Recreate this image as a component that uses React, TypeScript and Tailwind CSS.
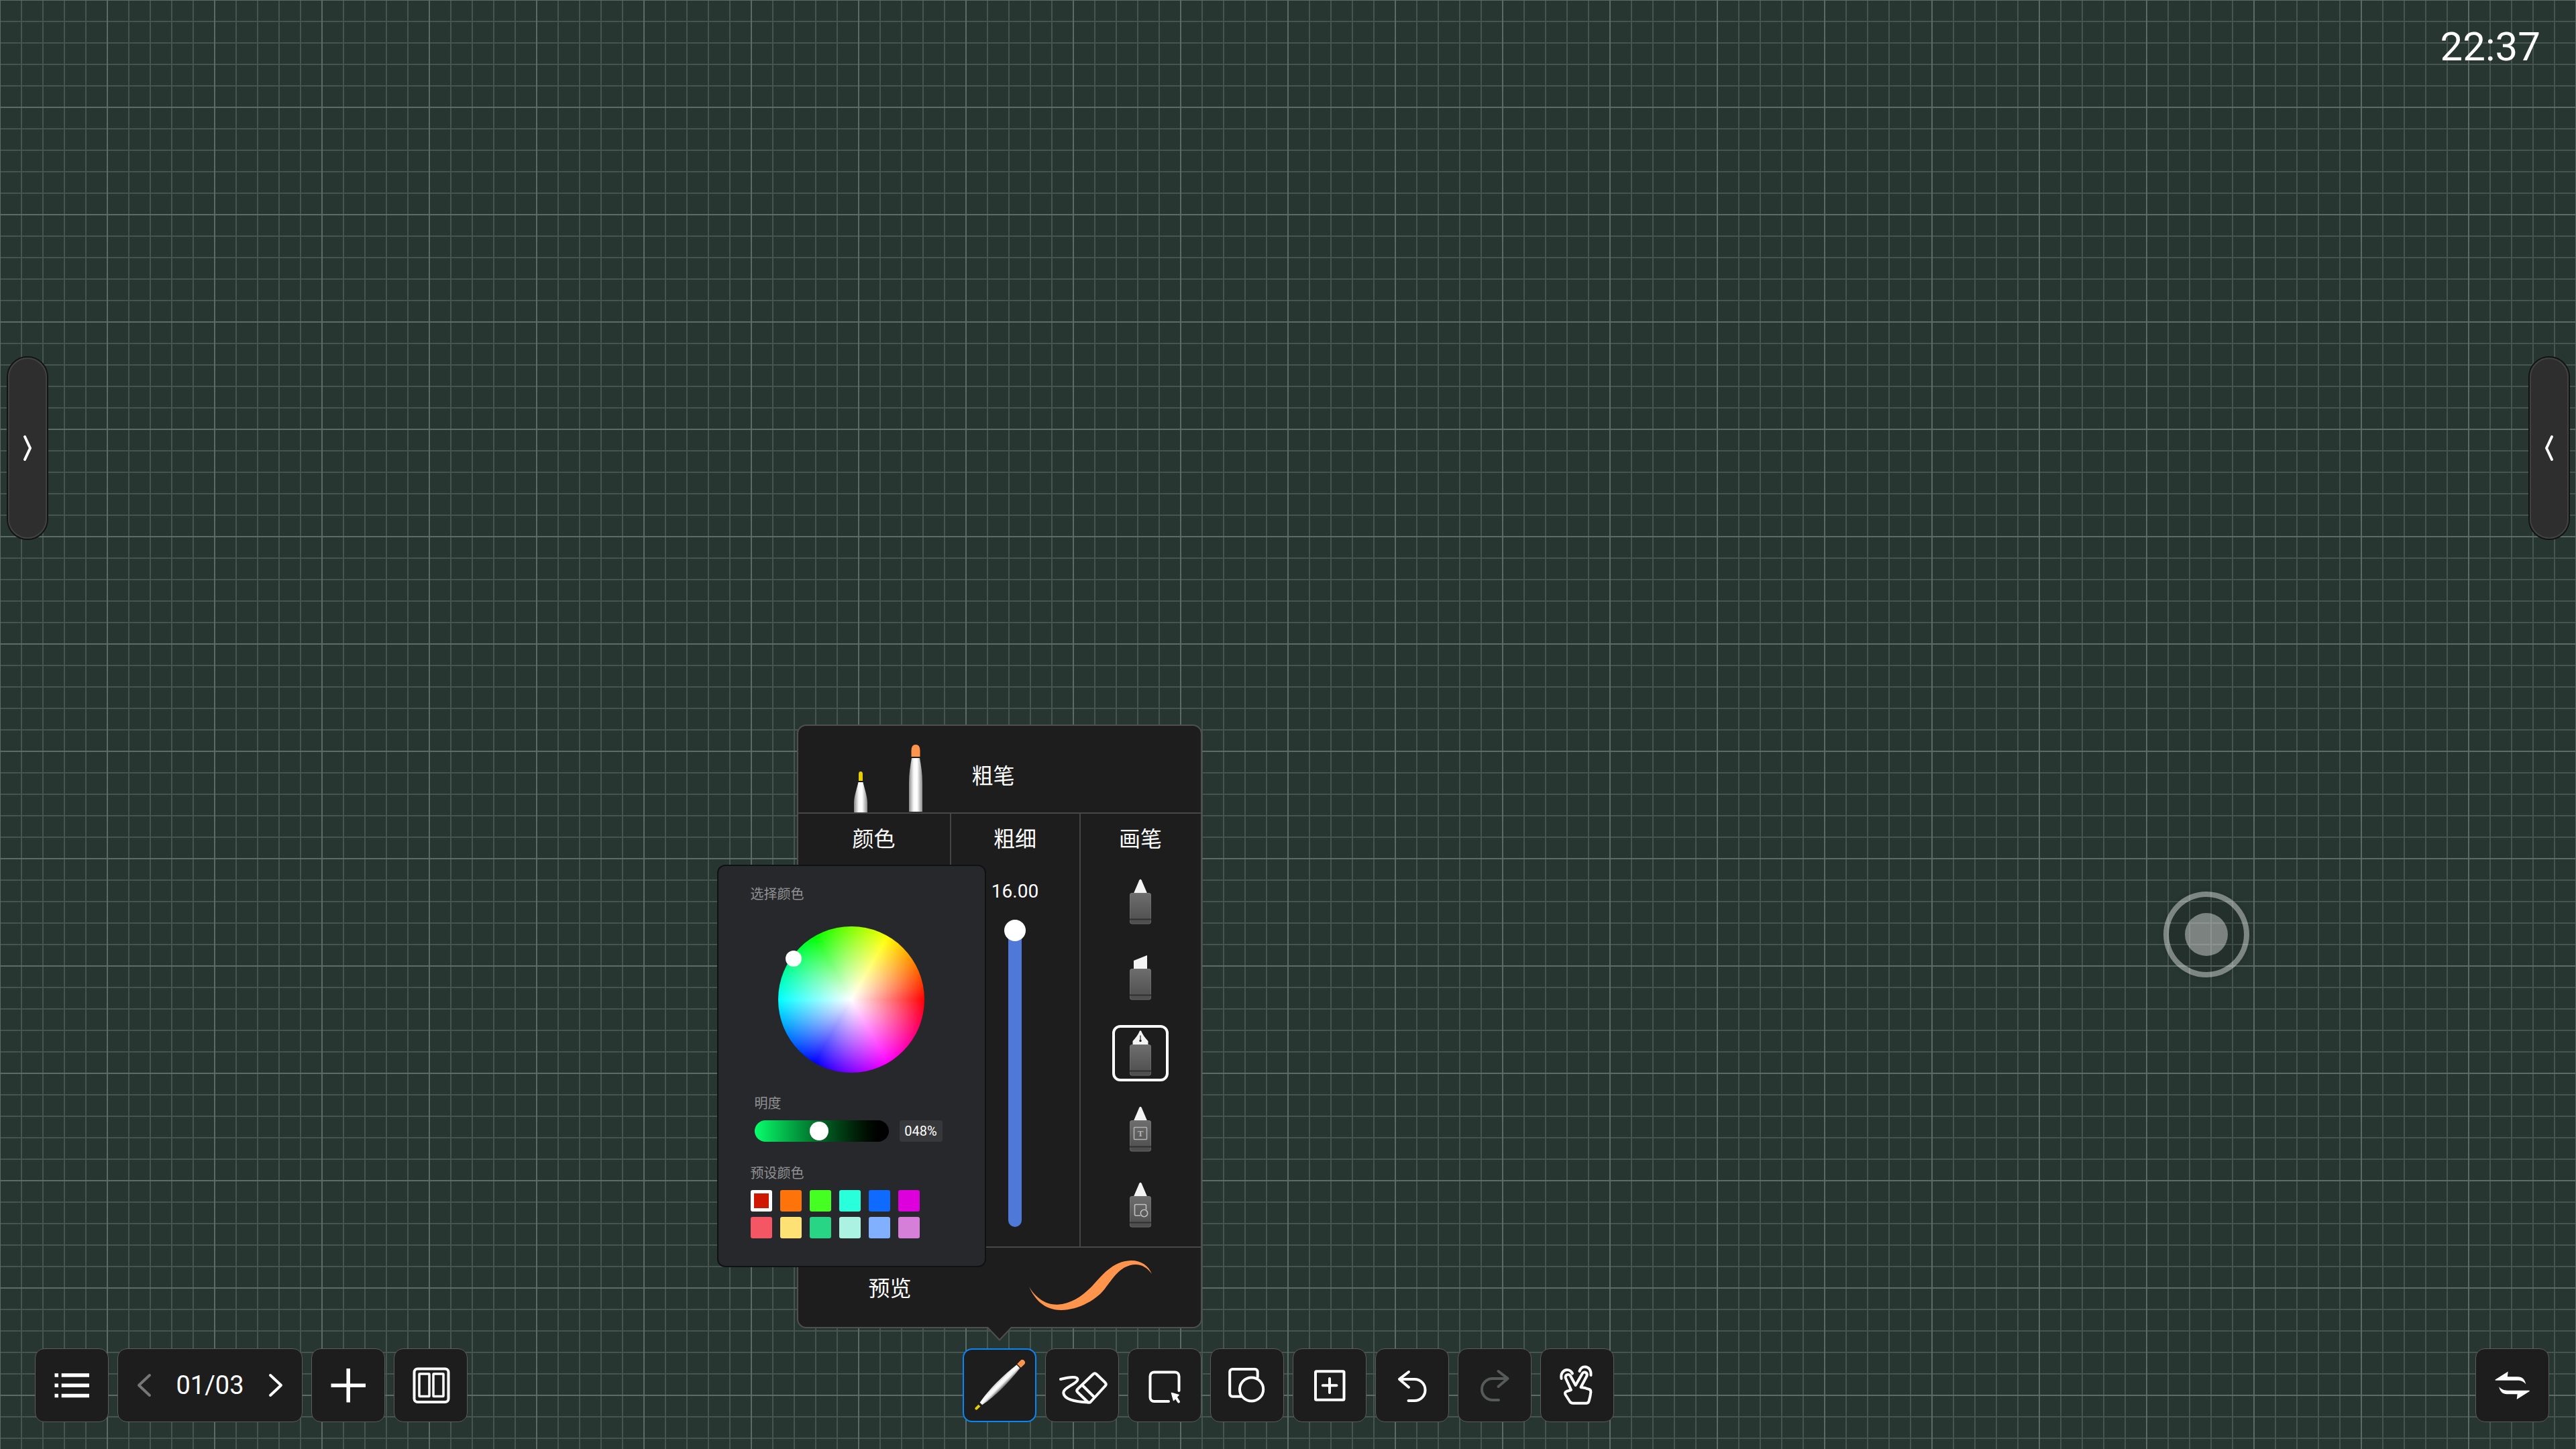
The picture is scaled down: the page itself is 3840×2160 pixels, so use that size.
import React, { useState } from "react";

const PRESETS = [
  { name: "红", color: "#cf1800" },
  { name: "橙", color: "#ff740a" },
  { name: "绿", color: "#45ff22" },
  { name: "青", color: "#29ffdb" },
  { name: "蓝", color: "#0f6aff" },
  { name: "紫", color: "#dd00dd" },
  { name: "浅红", color: "#f45763" },
  { name: "浅黄", color: "#fee175" },
  { name: "浅绿", color: "#28d584" },
  { name: "浅青", color: "#acf2e3" },
  { name: "浅蓝", color: "#80b0ff" },
  { name: "浅紫", color: "#d57fd9" },
];

const TOOL =
  "block h-[110px] w-[110px] rounded-[14px] border border-[#5c5c5c] bg-[#1d1d1d] text-white";

function Glyph({ children, width = 4 }: { children: React.ReactNode; width?: number }) {
  return (
    <svg
      viewBox="1 1 108 108"
      className="block h-full w-full"
      fill="none"
      stroke="currentColor"
      strokeWidth={width}
      strokeLinecap="round"
      strokeLinejoin="round"
      aria-hidden="true"
    >
      {children}
    </svg>
  );
}

function ToolButton({
  label,
  children,
  muted = false,
  width = 4,
}: {
  label: string;
  children: React.ReactNode;
  muted?: boolean;
  width?: number;
}) {
  return (
    <button type="button" aria-label={label} disabled={muted} className={TOOL}>
      <span className={muted ? "block h-full text-[#565b5a]" : "block h-full text-white"}>
        <Glyph width={width}>{children}</Glyph>
      </span>
    </button>
  );
}

function SideHandle({ label, path }: { label: string; path: string }) {
  return (
    <button
      type="button"
      aria-label={label}
      className="h-[274px] w-[62px] rounded-full border-2 border-[#121413] bg-[#2e2e2e] text-white"
    >
      <span className="block h-full w-full rounded-full border-2 border-[#414141]">
        <svg
          viewBox="4 4 54 266"
          className="block h-full w-full"
          fill="none"
          stroke="currentColor"
          strokeWidth="4"
          strokeLinecap="round"
          strokeLinejoin="round"
          aria-hidden="true"
        >
          <path d={path} />
        </svg>
      </span>
    </button>
  );
}

type Brush = "pen" | "marker" | "fountain" | "text" | "shape";

function BrushIcon({ kind }: { kind: Brush }) {
  return (
    <svg viewBox="0 0 34 68" className="h-[68px] w-[34px]" aria-hidden="true">
      <defs>
        <linearGradient id={"body-" + kind} x1="0" y1="0" x2="0" y2="1">
          <stop offset="0" stopColor="#6e6e6e" />
          <stop offset="1" stopColor="#4c4c4c" />
        </linearGradient>
      </defs>
      {kind === "marker" ? (
        <path d="M7 21V9L27 1V21Z" fill="#f3f3f3" />
      ) : kind === "fountain" ? (
        <>
          <path d="M5.500 22V16C10 11 14 6 16 0.500H18C20 6 24 11 28.500 16V22Z" fill="#f3f3f3" />
          <path d="M17 7.500V15" stroke="#1d1d1d" strokeWidth="1.200" />
          <circle cx="17" cy="15.500" r="1.700" fill="#1d1d1d" />
        </>
      ) : (
        <path d="M7 21.500L15.200 2.200Q17 -0.500 18.800 2.200L27 21.500Z" fill="#f3f3f3" />
      )}
      <rect x="1" y="21" width="32" height="46.500" rx="3.500" fill={`url(#body-${kind})`} />
      <rect x="1.500" y="21.500" width="31" height="45.500" rx="3" fill="none" stroke="#7c7c7c" strokeOpacity="0.5" />
      <rect x="1" y="59.500" width="32" height="2" fill="#303032" />
      {kind === "text" && (
        <>
          <rect x="7.500" y="31.500" width="19" height="18" rx="1" fill="none" stroke="#b4b4b4" strokeWidth="1.500" />
          <text
            x="17"
            y="45"
            textAnchor="middle"
            fontFamily="Liberation Serif, serif"
            fontWeight="700"
            fontSize="13"
            fill="#b4b4b4"
          >
            T
          </text>
        </>
      )}
      {kind === "shape" && (
        <g fill="none" stroke="#c0c0c0" strokeWidth="1.600">
          <path d="M17 50H10Q8.500 50 8.500 48.500V35Q8.500 33.500 10 33.500H24Q25.500 33.500 25.500 35V41" />
          <circle cx="22.500" cy="46.500" r="5.200" />
        </g>
      )}
    </svg>
  );
}

const BRUSHES: { kind: Brush; label: string }[] = [
  { kind: "pen", label: "硬笔" },
  { kind: "marker", label: "荧光笔" },
  { kind: "fountain", label: "钢笔" },
  { kind: "text", label: "文字识别笔" },
  { kind: "shape", label: "图形识别笔" },
];

function BarrelGradient({ id }: { id: string }) {
  return (
    <linearGradient id={id} x1="0" y1="0" x2="1" y2="0">
      <stop offset="0" stopColor="#8a8a8a" />
      <stop offset="0.35" stopColor="#f8f8f8" />
      <stop offset="0.6" stopColor="#ffffff" />
      <stop offset="1" stopColor="#8a8a8a" />
    </linearGradient>
  );
}

function ColorPopup() {
  const [light, setLight] = useState(48);
  const [preset, setPreset] = useState("红");
  return (
    <section
      aria-label="选择颜色"
      className="absolute top-[207px] left-[-121px] flex w-[401px] flex-col rounded-xl border-2 border-[#101113] bg-[#27282c] px-12 pt-7 pb-[41px] text-[20px] leading-7 text-[#919193]"
    >
      <h3>选择颜色</h3>
      <div className="relative mt-[34px] h-[218px] w-[218px] self-center rounded-full bg-[radial-gradient(closest-side,#fff,rgba(255,255,255,0)),conic-gradient(from_90deg,#f00,#f0f,#00f,#0ff,#0f0,#ff0,#f00)]">
        <button
          type="button"
          aria-label="色相"
          className="absolute top-9 left-[11px] h-6 w-6 rounded-full bg-white"
        />
      </div>
      <label htmlFor="brightness" className="mt-8 ml-1.5">
        明度
      </label>
      <div className="mt-[11px] ml-1.5 flex gap-4">
        <input
          id="brightness"
          type="range"
          min={0}
          max={100}
          value={light}
          onChange={(e) => setLight(Number(e.target.value))}
          className="h-8 w-[200px] appearance-none rounded-full bg-linear-to-r from-[#08ff6c] to-black [&::-webkit-slider-thumb]:h-7 [&::-webkit-slider-thumb]:w-7 [&::-webkit-slider-thumb]:appearance-none [&::-webkit-slider-thumb]:rounded-full [&::-webkit-slider-thumb]:bg-white"
        />
        <output
          htmlFor="brightness"
          className="h-8 w-16 rounded-sm bg-[#37383c] text-center leading-8 text-white"
        >
          {String(light).padStart(3, "0")}%
        </output>
      </div>
      <h3 className="mt-[33px]">预设颜色</h3>
      <div className="mt-[11px] grid grid-cols-[repeat(6,32px)] gap-x-3 gap-y-2">
        {PRESETS.map((p) => (
          <button
            key={p.name}
            type="button"
            aria-label={p.name}
            aria-pressed={preset === p.name}
            onClick={() => setPreset(p.name)}
            style={{ backgroundColor: p.color }}
            className={
              preset === p.name
                ? "h-8 rounded-[3px] border-[5px] border-white"
                : "h-8 rounded-[3px]"
            }
          />
        ))}
      </div>
    </section>
  );
}

function PenPanel() {
  const [size, setSize] = useState(16);
  const [brush, setBrush] = useState<Brush>("fountain");
  return (
    <section
      aria-label="画笔设置"
      className="absolute bottom-full left-1/2 mb-[30px] w-[604px] -translate-x-1/2 rounded-[14px] border-2 border-[#4f4f50] bg-[#1d1d1d] text-[32px] leading-10 text-white"
    >
      <header className="flex h-[131px] items-end border-b-2 border-[#47474b] pl-[73px]">
        <button type="button" aria-label="细笔" className="block">
          <svg viewBox="0 0 40 102" className="block h-[102px] w-10" aria-hidden="true">
            <defs>
              <BarrelGradient id="thin-barrel" />
            </defs>
            <path d="M17 55V45Q17 41 20 41Q23 41 23 45V55Z" fill="#e8d000" />
            <path d="M10 102V88C10 78 14 68 16.500 57H23.500C26 68 30 78 30 88V102Z" fill="url(#thin-barrel)" />
          </svg>
        </button>
        <button type="button" aria-label="粗笔" aria-pressed="true" className="ml-[42px] block">
          <svg viewBox="0 0 40 102" className="block h-[102px] w-10" aria-hidden="true">
            <defs>
              <BarrelGradient id="thick-barrel" />
            </defs>
            <path d="M13.500 19V10Q13.500 1 20 1Q26.500 1 26.500 10V19Z" fill="#ff954d" />
            <path d="M10 101V58C10 44 12 32 14 21H26C28 32 30 44 30 58V101Z" fill="url(#thick-barrel)" />
          </svg>
        </button>
        <h2 className="mb-[34px] ml-16">粗笔</h2>
      </header>

      <div className="grid grid-cols-[228px_193px_1fr] border-b-2 border-[#47474b] text-center">
        <section className="border-r-2 border-[#444447] pt-[18px]">
          <h2>颜色</h2>
        </section>
        <section className="flex flex-col items-center border-r-2 border-[#444447] pt-[18px] pb-[29px]">
          <h2>
            <label htmlFor="stroke-size">粗细</label>
          </h2>
          <output htmlFor="stroke-size" className="mt-10 text-[28px] leading-9">
            {size.toFixed(2)}
          </output>
          <input
            id="stroke-size"
            type="range"
            min={1}
            max={16}
            step={0.25}
            value={size}
            onChange={(e) => setSize(Number(e.target.value))}
            className="mt-6 h-[458px] w-8 appearance-none bg-transparent [direction:rtl] [writing-mode:vertical-lr] [&::-webkit-slider-runnable-track]:w-5 [&::-webkit-slider-runnable-track]:rounded-full [&::-webkit-slider-runnable-track]:bg-[#4f79d9] [&::-webkit-slider-thumb]:-ml-1.5 [&::-webkit-slider-thumb]:h-8 [&::-webkit-slider-thumb]:w-8 [&::-webkit-slider-thumb]:appearance-none [&::-webkit-slider-thumb]:rounded-full [&::-webkit-slider-thumb]:bg-white"
          />
        </section>
        <section className="pt-[18px] pb-5">
          <h2>画笔</h2>
          <div className="mt-[31px] flex flex-col items-center gap-[29px]">
            {BRUSHES.map((b) => (
              <button
                key={b.kind}
                type="button"
                aria-label={b.label}
                aria-pressed={brush === b.kind}
                onClick={() => setBrush(b.kind)}
                className={
                  brush === b.kind
                    ? "flex h-[84px] w-[84px] items-center justify-center rounded-xl border-4 border-white"
                    : "flex h-[84px] w-[84px] items-center justify-center"
                }
              >
                <BrushIcon kind={b.kind} />
              </button>
            ))}
          </div>
        </section>
      </div>

      <footer className="flex h-[118px] items-center pl-[105px]">
        <h2 className="pt-1">预览</h2>
        <svg viewBox="0 0 184 80" className="ml-[175px] h-20 w-[184px]" aria-hidden="true">
          <path
            d="M0 39C10 56 25 66 42 65.700C62 65 78 54 93 39.300C108 23 124 1 152 0C168 0 178 8 183 20C176 11 169 6 158.500 6C137 7 127 24 115 39.300C103 58 73 74 48 74C22 74 8 57 0 39Z"
            fill="#ff954d"
          />
        </svg>
      </footer>

      <svg
        viewBox="0 0 38 22"
        className="absolute top-full left-1/2 h-[22px] w-[38px] -translate-x-1/2"
        aria-hidden="true"
      >
        <path d="M0 0H38V2H36.500L19 20L1.500 2H0Z" fill="#1d1d1d" />
        <path d="M0 1H1.500L19 19.500L36.500 1H38" fill="none" stroke="#4f4f50" strokeWidth="2" />
      </svg>

      <ColorPopup />
    </section>
  );
}

export default function App() {
  return (
    <main className="relative flex min-h-screen flex-col overflow-hidden bg-[#273630] bg-[linear-gradient(to_right,#5d6a65_2px,transparent_2px),linear-gradient(to_bottom,#5d6a65_2px,transparent_2px),linear-gradient(to_right,#465550_2px,transparent_2px),linear-gradient(to_bottom,#465550_2px,transparent_2px)] bg-[length:160px_160px,160px_160px,32px_32px,32px_32px] bg-[position:-1px_-1px] font-['Roboto','Noto_Sans_CJK_SC',sans-serif] text-white">
      <header className="flex justify-end pt-[34px] pr-[53px]">
        <time className="text-[60px] leading-[72px]">22:37</time>
      </header>

      <div className="mt-[425px] flex justify-between pr-[9px] pl-2.5">
        <SideHandle label="展开左侧栏" path="M27 120L35 137L27 154" />
        <SideHandle label="展开右侧栏" path="M35 120L27 137L35 154" />
      </div>

      <button
        type="button"
        aria-label="悬浮球"
        className="absolute top-[1329px] right-[487px] flex h-32 w-32 items-center justify-center rounded-full border-8 border-white/40 bg-black/10 bg-clip-padding shadow-[0_0_8px_rgba(0,0,0,0.12)]"
      >
        <span className="h-16 w-16 rounded-full bg-white/40" />
      </button>

      <footer className="mt-auto grid grid-cols-[1fr_auto_1fr] px-10 pb-10">
        <nav aria-label="页面" className="flex gap-[13px] pl-3">
          <ToolButton label="菜单" width={5}>
            <g strokeLinecap="butt">
              <path d="M29.500 40H35M39.700 40H81M29.500 55.300H35M39.700 55.300H81M29.500 70.500H35M39.700 70.500H81" strokeWidth="5.500" />
            </g>
          </ToolButton>
          <div className="flex h-[110px] w-[276px] items-center justify-between rounded-[14px] border border-[#5c5c5c] bg-[#1d1d1d] px-7">
            <button type="button" aria-label="上一页" disabled className="text-[#777777]">
              <svg viewBox="0 0 22 36" className="block h-9 w-[22px]" fill="none" stroke="currentColor" strokeWidth="4" strokeLinecap="round" strokeLinejoin="round" aria-hidden="true">
                <path d="M19 3L3 18L19 33" />
              </svg>
            </button>
            <span className="text-[38px] leading-none">01/03</span>
            <button type="button" aria-label="下一页" className="text-white">
              <svg viewBox="0 0 22 36" className="block h-9 w-[22px]" fill="none" stroke="currentColor" strokeWidth="4" strokeLinecap="round" strokeLinejoin="round" aria-hidden="true">
                <path d="M3 3L19 18L3 33" />
              </svg>
            </button>
          </div>
          <ToolButton label="新建页面">
            <path d="M55.200 30V80.500M29.500 55.300H81" strokeWidth="5.500" strokeLinecap="butt" />
          </ToolButton>
          <ToolButton label="全部页面">
            <rect x="30.500" y="30.500" width="51" height="49.500" rx="5" />
            <rect x="38" y="38" width="15" height="33.500" rx="0.500" strokeWidth="3.500" />
            <rect x="59" y="38" width="15" height="33.500" rx="0.500" strokeWidth="3.500" />
          </ToolButton>
        </nav>

        <nav aria-label="工具" className="flex gap-[13px]">
          <div className="relative">
            <button
              type="button"
              aria-label="画笔"
              aria-pressed="true"
              className="block h-[110px] w-[110px] rounded-[14px] border-2 border-[#0a85f5] bg-[#1d1d1d]"
            >
              <svg viewBox="2 2 106 106" className="block h-full w-full" aria-hidden="true">
                <defs>
                  <linearGradient id="pen-barrel" x1="0" y1="0" x2="1" y2="0">
                    <stop offset="0" stopColor="#c4c4c4" />
                    <stop offset="0.3" stopColor="#ffffff" />
                    <stop offset="0.6" stopColor="#f4f4f4" />
                    <stop offset="1" stopColor="#6a6a6a" />
                  </linearGradient>
                </defs>
                <g transform="translate(55 55) rotate(45)">
                  <path d="M-4 -41V-48Q-4 -52 0 -52Q4 -52 4 -48V-41Z" fill="#ff954d" />
                  <path d="M-3.500 -39.500H3.500C5 -28 6 -14 6 0C6 14 4.500 28 2.500 39H-2.500C-4.500 28 -6 14 -6 0C-6 -14 -5 -28 -3.500 -39.500Z" fill="url(#pen-barrel)" />
                  <path d="M-2 42.500H2V49Q2 51 0 51Q-2 51 -2 49Z" fill="#e8d000" />
                </g>
              </svg>
            </button>
            <PenPanel />
          </div>
          <ToolButton label="橡皮擦">
            <path d="M23 46C35 43 43 42 47 44C51 46.500 46 50.500 42 53C34 58 26 62 27.500 67.500C29 75 42 79.500 64 80.500" />
            <path d="M71.500 38.500Q74 36 76.500 38.500L89.500 51Q92 53.500 89.500 56L68 79.500Q65.500 82 63 79.500L48.500 65.500Q46 63 48.500 60.500Z" />
            <path d="M55.500 55L72.500 72" />
          </ToolButton>
          <ToolButton label="选择">
            <path d="M76.500 63V41.500A6 6 0 0 0 70.500 35.500H39.500A6 6 0 0 0 33.500 41.500V73A6 6 0 0 0 39.500 79H61" />
            <path d="M65.500 66.500L76 69.500L68.500 77.500Z" fill="currentColor" strokeWidth="1.500" />
            <path d="M71.500 72.500L76 79.500" />
          </ToolButton>
          <ToolButton label="图形">
            <path d="M70.700 43V35A4 4 0 0 0 66.700 31H33.200A4 4 0 0 0 29.200 35V67.700A4 4 0 0 0 33.200 71.700H46" />
            <circle cx="61.600" cy="61" r="17.600" />
          </ToolButton>
          <ToolButton label="插入">
            <rect x="34" y="34.300" width="42.500" height="42.500" rx="1.500" />
            <path d="M55 45V66M44.800 55.300H65.500" />
          </ToolButton>
          <ToolButton label="撤销">
            <path d="M50 35L36 45.900L50 58M36 45.900H58.500A16 16 0 0 1 58.500 78H49.500" />
          </ToolButton>
          <ToolButton label="重做" muted>
            <path d="M60.500 34L74.500 44.900L60.500 57M74.500 44.900H52A16 16 0 0 0 52 77H61" />
          </ToolButton>
          <ToolButton label="手势">
            <path d="M31.500 45C30 37 35 32 40 32C44 32 46.500 34.500 48 37.500M58.500 34C60 29.500 63.500 27.500 66.500 27.500C73 27.500 76 33 75.500 40" />
            <path d="M52.700 55L45 41C43 37.500 36 39 38 44.500L46 62L39.500 64Q36 65.500 37.500 69L44 79Q45.500 81.700 49 81.700H68.500Q71.500 81.700 72.500 79C74 74 75 69 75.400 65Q75.500 61 71.500 60.500Q69 60 67 59L60.500 58L69.500 41C71 35.500 64.500 33.500 62.500 38Z" />
          </ToolButton>
        </nav>

        <div className="flex justify-end">
          <ToolButton label="切换工具栏位置">
            <g fill="currentColor" stroke="none">
              <path d="M29.700 47.800V46.500L48.700 34.500L47.800 42.300H63C70 42.300 73.500 46 75.300 53.500C72 49.500 68 47.800 62.700 47.800Z" />
              <path d="M80.700 62.700V64L61.700 76L62.600 68.200H47.400C40.400 68.200 36.900 64.500 35.100 57C38.400 61 42.400 62.700 47.700 62.700Z" />
            </g>
          </ToolButton>
        </div>
      </footer>
    </main>
  );
}
